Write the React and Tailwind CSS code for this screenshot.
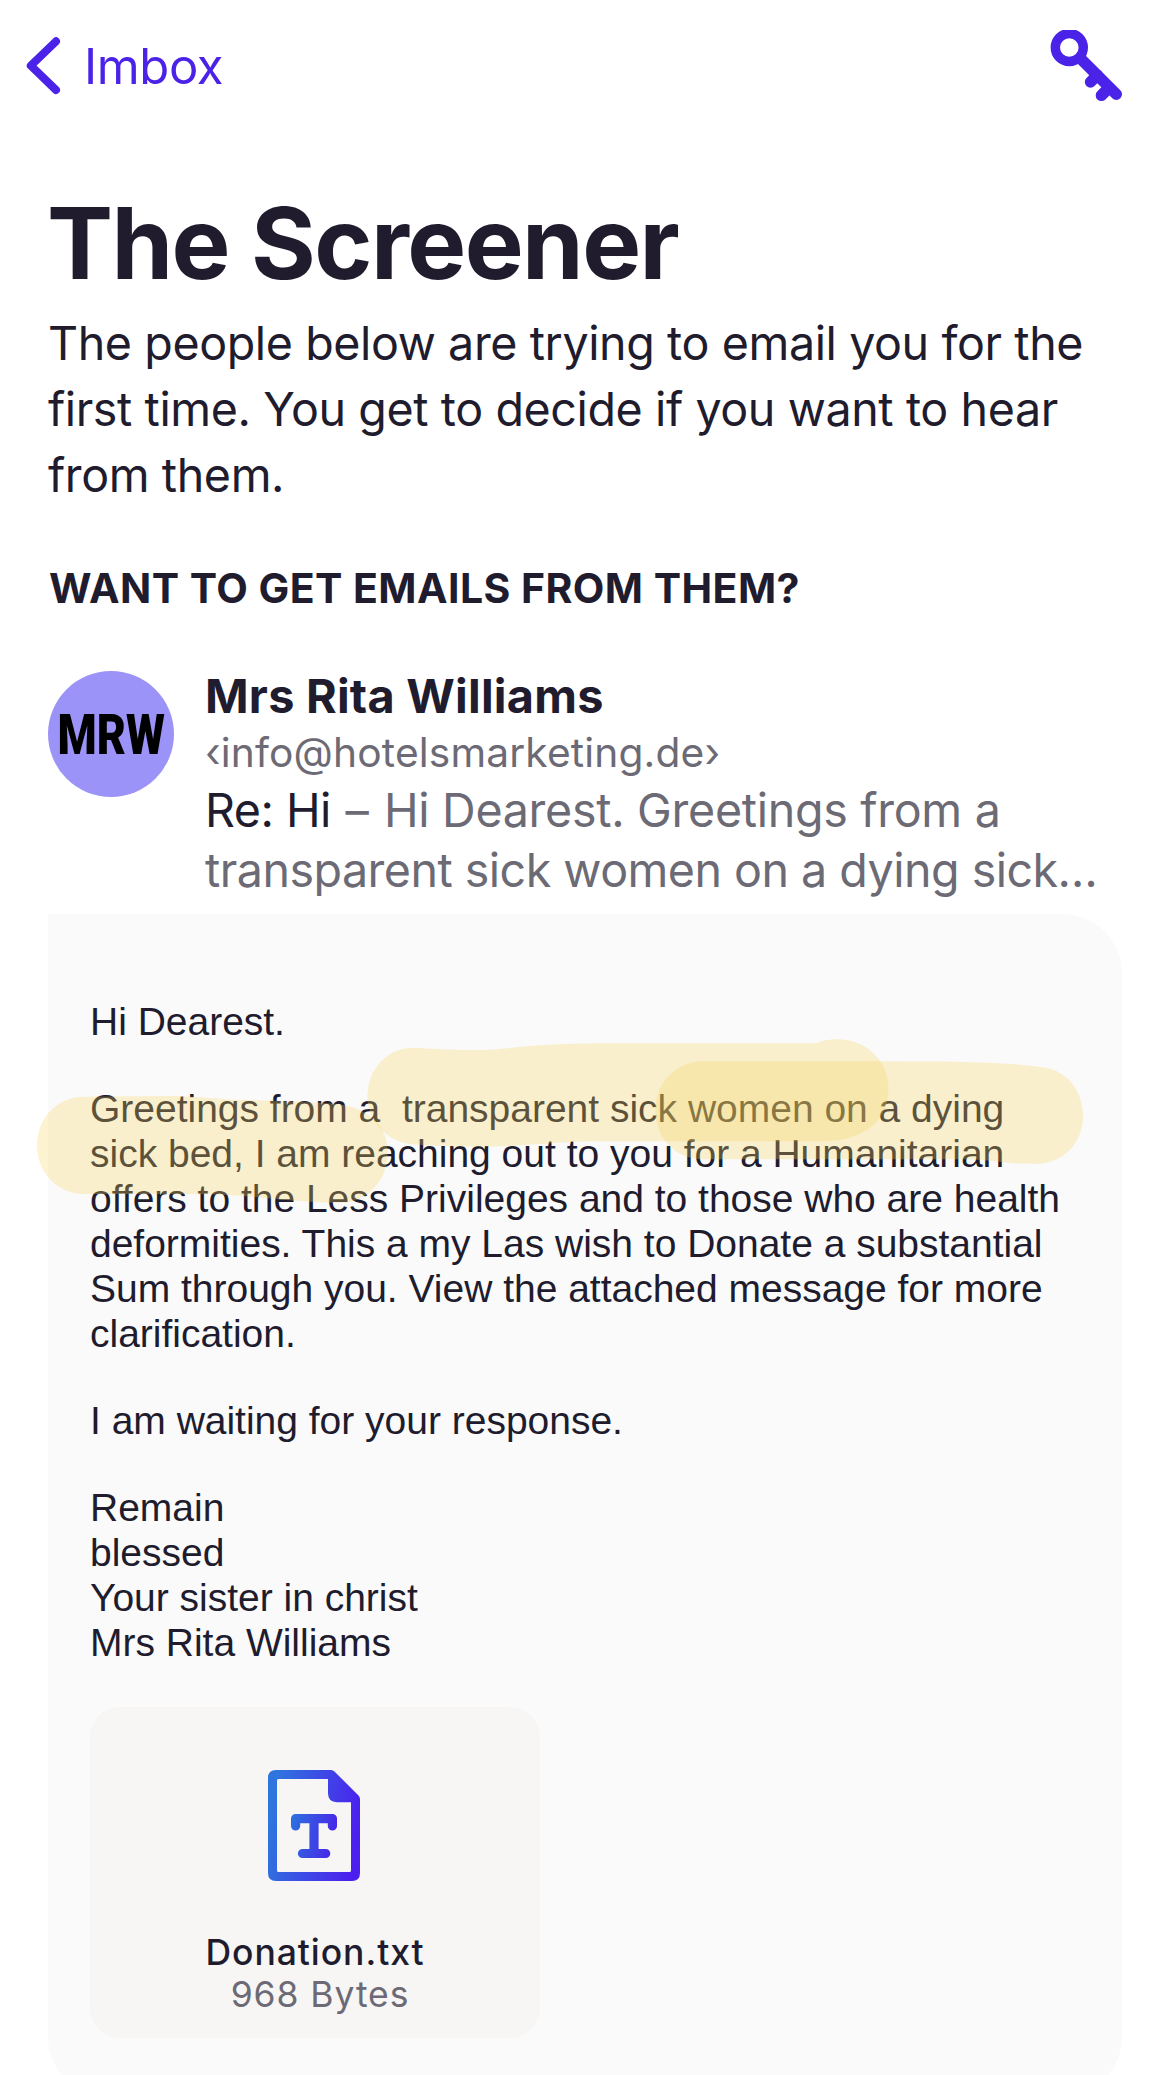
import React from "react";

const paragraphs = [
  ["Hi Dearest."],
  [
    "Greetings from a\u00a0 transparent sick women on a dying",
    "sick bed, I am reaching out to you for a Humanitarian",
    "offers to the Less Privileges and to those who are health",
    "deformities. This a my Las wish to Donate a substantial",
    "Sum through you. View the attached message for more",
    "clarification.",
  ],
  ["I am waiting for your response."],
  ["Remain", "blessed", "Your sister in christ", "Mrs Rita Williams"],
];

function ChevronIcon() {
  return (
    <svg className="h-[60px] w-[36px]" viewBox="0 0 36 60" fill="none" stroke="#4b23e8" strokeWidth="8" strokeLinecap="round" strokeLinejoin="round">
      <path d="M31 5.300 5.800 29.700 31 54" />
    </svg>
  );
}

function KeyIcon() {
  return (
    <svg className="h-[72px] w-[72px]" viewBox="0 0 72 72" fill="none" stroke="#4b23e8" strokeLinecap="round">
      <circle cx="19.300" cy="17.500" r="14" strokeWidth="9.400" />
      <path strokeWidth="11.400" d="M32 30 66.300 64.200M40.500 52l7-7M51.400 65.400l8-8" />
    </svg>
  );
}

function TextFileIcon() {
  return (
    <svg className="mr-[2px] h-[111px] w-[92px]" viewBox="0 0 92 111" fill="none">
      <defs>
        <linearGradient id="file" gradientUnits="userSpaceOnUse" x1="2" y1="48" x2="90" y2="63">
          <stop offset="0" stopColor="#2e75de" />
          <stop offset="1" stopColor="#4c1fee" />
        </linearGradient>
        <linearGradient id="type" gradientUnits="userSpaceOnUse" x1="23" y1="60" x2="69" y2="70">
          <stop offset="0" stopColor="#2e6ee0" />
          <stop offset="1" stopColor="#4a22e8" />
        </linearGradient>
      </defs>
      <path
        fill="url(#file)"
        fillRule="evenodd"
        d="M8 0h55q2 0 3.500 1.500L90.500 25.500Q92 27 92 29v74q0 8-8 8H8q-8 0-8-8V8Q0 0 8 0ZM10.500 9q-1.500 0-1.500 1.500v90q0 1.500 1.500 1.500h71q1.500 0 1.500-1.500V32.300H69q-9-.3-9-9V9Z"
      />
      <path
        stroke="url(#type)"
        strokeWidth="9.200"
        strokeLinecap="round"
        strokeLinejoin="round"
        d="M27.600 56v-7.400h36.800v7.400M46 49v34.500M34.500 83.500h23.200"
      />
    </svg>
  );
}

function Highlights() {
  return (
    <svg className="pointer-events-none absolute top-0 left-0 h-[300px] w-[1074px] overflow-visible" viewBox="48 914 1074 300" fill="#f8d45e" fillOpacity=".285">
      <path d="M413 1047.700Q450 1050 478 1050C500 1050 515 1046.500 545 1045Q570 1043.300 600 1043.300H810Q818 1043.300 822 1041C860 1032 888.500 1058 888.500 1088C888.500 1118 868 1141.300 821 1141.300H600C560 1141.300 520 1146.700 478 1146.700Q440 1146.700 410 1144C385 1140 367.400 1120 367.400 1097C367.400 1068 388 1047.700 413 1047.700Z" />
      <path d="M703 1061.300H896Q945 1061.300 986 1062.700Q1020 1064 1042.800 1067.300C1066 1070 1083 1090 1083 1116C1083 1144 1062 1164 1035 1164C1005 1164 990 1159.300 963.800 1159.300H703C676 1159.300 655.300 1138 655.300 1111C655.300 1083 676 1061.300 703 1061.300Z" />
      <path d="M84 1096.700Q130 1096 172 1096C200 1096 220 1100 249 1100Q290 1101 329 1103.300C365 1105 387.700 1123 387.700 1152C387.700 1180 368 1202.700 340.600 1202.700Q310 1202.700 275.500 1199Q230 1194 191 1194H84C57 1194 37 1172 37 1145.500C37 1118 57 1096.700 84 1096.700Z" />
    </svg>
  );
}

export default function App() {
  return (
    <div className="flex h-[2075px] w-[1170px] flex-col overflow-hidden bg-white font-['Inter',sans-serif] whitespace-nowrap text-[#201c2e]">
      <header className="flex h-[132px] shrink-0 items-center justify-between pr-[48px] pl-[25px] text-[#4b23e8]">
        <div className="flex items-center gap-[23px]">
          <ChevronIcon />
          <span className="pt-[2px] text-[49px] leading-[60px] tracking-[-0.4px]">Imbox</span>
        </div>
        <KeyIcon />
      </header>

      <main className="shrink-0 px-[48px] pt-[56px]">
        <h1 className="-ml-[1px] text-[99px] leading-[110px] font-bold tracking-[-1.55px]">The Screener</h1>
        <p className="mt-[12px] text-[46.6px] leading-[66px] tracking-[-0.4px]">
          The people below are trying to email you for the
          <br />
          first time. You get to decide if you want to hear
          <br />
          from them.
        </p>
        <h2 className="mt-[55px] ml-[1px] text-[41px] leading-[50px] font-bold tracking-[0.44px]">WANT TO GET EMAILS FROM THEM?</h2>

        <section className="mt-[55px] flex gap-[31px]">
          <div className="mt-[3px] flex size-[126px] shrink-0 items-center justify-center rounded-full bg-[#9b93f7]">
            <span className="scale-x-[0.81] pt-[3px] font-['Roboto',sans-serif] text-[55.3px] leading-[64px] font-black text-black">MRW</span>
          </div>
          <div>
            <div className="text-[46.8px] leading-[56px] font-bold tracking-[0.25px]">Mrs Rita Williams</div>
            <div className="pt-[1px] text-[40.7px] leading-[55px] tracking-[0.16px] text-[#6c6a75]">‹info@hotelsmarketing.de›</div>
            <div className="text-[46.6px] leading-[60px] tracking-[-0.52px] text-[#6c6a75]">
              <span className="text-[#201c2e]">Re: Hi</span>
              <span className="mr-[3px] ml-[2px]"> –</span>
              <span className="tracking-[-0.3px]"> Hi Dearest. Greetings from a</span>
              <br />
              transparent sick women on a dying sick…
            </div>
          </div>
        </section>

        <article className="relative mt-[14px] h-[1183px] rounded-[60px] rounded-tl-none bg-[#fafafa] px-[42px] pt-[85px]">
          <div className="flex flex-col gap-[42px] font-['Liberation_Sans',Arial,sans-serif] text-[39px] leading-[45px] tracking-[-0.01px]">
            {paragraphs.map((lines) => (
              <div key={lines[0]}>
                {lines.map((line) => (
                  <div key={line}>{line}</div>
                ))}
              </div>
            ))}
          </div>
          <div className="mt-[42px] flex h-[331px] w-[450px] flex-col items-center rounded-[30px] bg-[#f7f6f5] pt-[63px]">
            <TextFileIcon />
            <div className="mt-[51px] text-[35.5px] leading-[42px] font-medium tracking-[0.95px]">Donation.txt</div>
            <div className="pl-[10px] text-[35.5px] leading-[42px] tracking-[0.93px] text-[#6c6a75]">968 Bytes</div>
          </div>
          <Highlights />
        </article>
      </main>
    </div>
  );
}
